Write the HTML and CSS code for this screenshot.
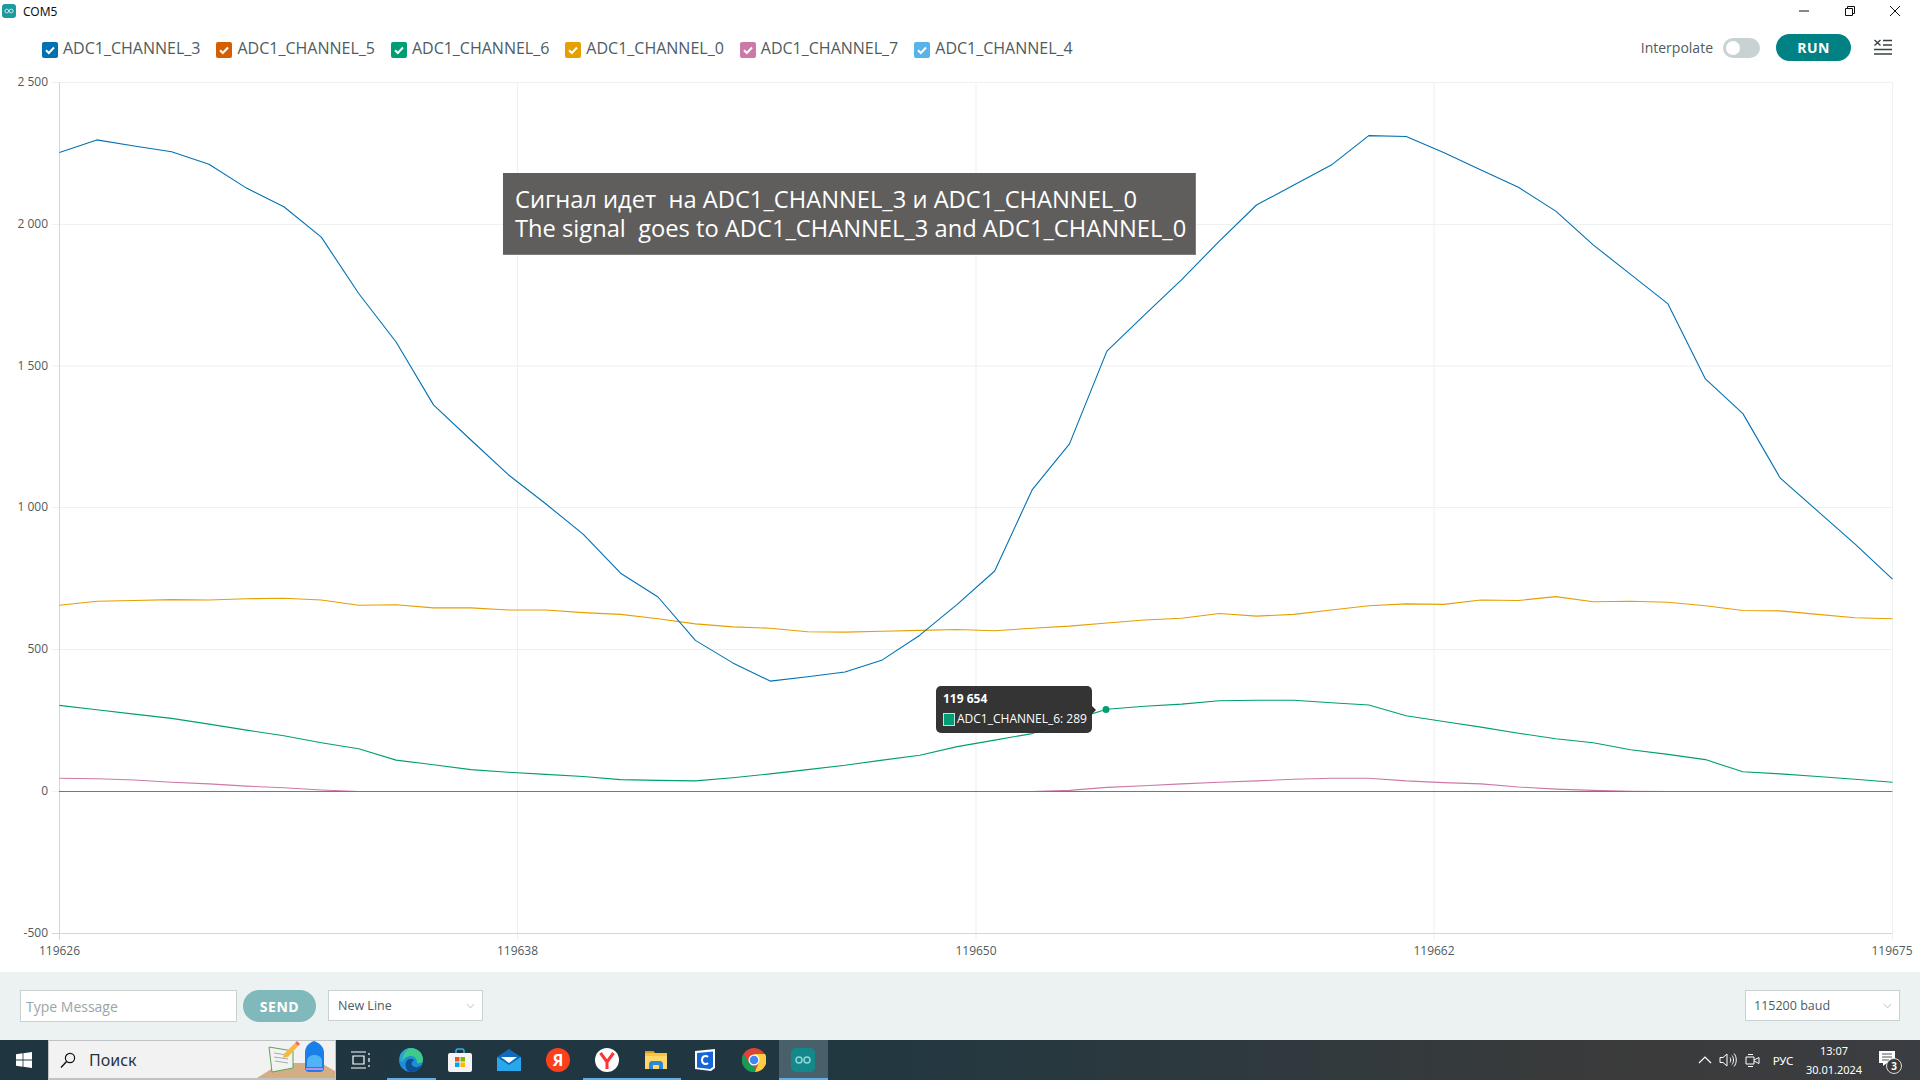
FILE: index.html
```
<!DOCTYPE html>
<html lang="ru">
<head>
<meta charset="utf-8">
<title>COM5</title>
<link rel="stylesheet" href="styles.css">
</head>
<body>
<div class="app">
  <header class="titlebar">
    <div class="title-left">
      <svg class="app-icon" viewBox="0 0 14 14"><rect width="14" height="14" rx="3" fill="#1d9a9e"/><circle cx="4.8" cy="7" r="1.9" fill="none" stroke="#bfe6e6" stroke-width="1"/><circle cx="9.2" cy="7" r="1.9" fill="none" stroke="#bfe6e6" stroke-width="1"/></svg>
      <span class="title-text">COM5</span>
    </div>
    <div class="win-controls">
      <svg class="win-btn" viewBox="0 0 12 12"><path d="M1 6H11" stroke="#111" fill="none"/></svg>
      <svg class="win-btn" viewBox="0 0 12 12"><path d="M1.5 3.5H8.5V10.5H1.5ZM3.5 3.5V1.5H10.5V8.5H8.5" stroke="#111" fill="none"/></svg>
      <svg class="win-btn" viewBox="0 0 12 12"><path d="M1 1L11 11M11 1L1 11" stroke="#111" fill="none"/></svg>
    </div>
  </header>

  <section class="legend">
    <div class="channels">
      <label class="channel"><span class="check c-blue"><svg viewBox="0 0 16 16"><path d="M4 8.3L6.8 11L12 5.5"/></svg></span>ADC1_CHANNEL_3</label>
      <label class="channel"><span class="check c-red"><svg viewBox="0 0 16 16"><path d="M4 8.3L6.8 11L12 5.5"/></svg></span>ADC1_CHANNEL_5</label>
      <label class="channel"><span class="check c-green"><svg viewBox="0 0 16 16"><path d="M4 8.3L6.8 11L12 5.5"/></svg></span>ADC1_CHANNEL_6</label>
      <label class="channel"><span class="check c-amber"><svg viewBox="0 0 16 16"><path d="M4 8.3L6.8 11L12 5.5"/></svg></span>ADC1_CHANNEL_0</label>
      <label class="channel"><span class="check c-pink"><svg viewBox="0 0 16 16"><path d="M4 8.3L6.8 11L12 5.5"/></svg></span>ADC1_CHANNEL_7</label>
      <label class="channel"><span class="check c-sky"><svg viewBox="0 0 16 16"><path d="M4 8.3L6.8 11L12 5.5"/></svg></span>ADC1_CHANNEL_4</label>
    </div>
    <div class="actions">
      <span class="interp">Interpolate</span>
      <span class="toggle"><span class="knob"></span></span>
      <button class="run">RUN</button>
      <svg class="clear-icon" viewBox="0 0 18 16"><path d="M0.5 1L6.5 6.5M6.5 1L0.5 6.5M9 1.5H18M9 6H18M0 10.5H18M0 15H18" stroke="#374146" stroke-width="1.4" fill="none"/></svg>
    </div>
  </section>

  <main class="chart">
    <svg class="plot" viewBox="0 66 1920 906">
      <g class="grid">
        <path d="M52 82.5H1892M52 224.5H1892M52 366H1892M52 507.5H1892M52 649.5H1892M52 791.5H1892"/>
        <path d="M517.5 82V940M976 82V940M1434 82V940M1892.5 82V940"/>
      </g>
      <path class="axis" d="M59.5 82V940M52 933.5H1892"/>
      <g class="ylabels">
        <text x="48" y="81.500">2 500</text>
        <text x="48" y="223.500">2 000</text>
        <text x="48" y="365">1 500</text>
        <text x="48" y="506.500">1 000</text>
        <text x="48" y="648.500">500</text>
        <text x="48" y="790.500">0</text>
        <text x="48" y="932.500">-500</text>
      </g>
      <g class="xlabels">
        <text x="59.500" y="950.500">119626</text>
        <text x="517.500" y="950.500">119638</text>
        <text x="976" y="950.500">119650</text>
        <text x="1434" y="950.500">119662</text>
        <text x="1892" y="950.500">119675</text>
      </g>
      <polyline class="line s-pink" points="59.4,778.3 96.8,778.7 134.2,780 171.6,782.2 209,783.9 246.5,786.1 283.9,787.8 321.3,790 358.7,791.5 396.1,791.5 1032.1,791.5 1069.5,790.4 1106.9,787.4 1144.3,785.7 1181.7,783.9 1219.1,782.2 1256.5,780.9 1293.9,779.2 1331.3,778.3 1368.8,778.3 1406.2,780.9 1443.6,782.6 1481,783.9 1518.4,787 1555.8,789.1 1593.2,790.4 1630.6,791.3 1668,791.5 1892.5,791.5"/>
      <polyline class="line s-amber" points="59.4,605.3 96.8,601.3 134.2,600.5 171.6,599.6 209,600 246.5,598.7 283.9,598.3 321.3,600 358.7,605.3 396.1,604.8 433.5,607.9 470.9,607.9 508.3,610 545.7,610 583.1,612.6 620.6,614.4 658,618.7 695.4,623.9 732.8,626.9 770.2,628.2 807.6,631.7 845,632.1 882.4,631.3 919.8,630.4 957.2,629.5 994.7,630.8 1032.1,628.2 1069.5,626.1 1106.9,623 1144.3,620 1181.7,618.3 1219.1,613.5 1256.5,616.1 1293.9,614.4 1331.3,610 1368.8,605.7 1406.2,603.9 1443.6,604.4 1481,600 1518.4,600.5 1555.8,596.6 1593.2,601.8 1630.6,601.3 1668,602.2 1705.4,605.7 1742.9,610.5 1780.3,610.9 1817.7,614.4 1855.1,617.8 1892.5,618.7"/>
      <polyline class="line s-green" points="59.4,705.4 96.8,709.8 134.2,714.1 171.6,718.4 209,724.1 246.5,730.1 283.9,735.8 321.3,742.7 358.7,748.8 396.1,760.1 433.5,764.8 470.9,769.6 508.3,772.2 545.7,774.4 583.1,776.5 620.6,779.6 658,780.4 695.4,780.9 732.8,777.8 770.2,773.9 807.6,769.6 845,765.3 882.4,760.1 919.8,755.3 957.2,746.6 994.7,740.1 1032.1,733.6 1069.5,720.6 1106.9,709.3 1144.3,706.3 1181.7,704.1 1219.1,700.7 1256.5,700.2 1293.9,700.2 1331.3,702.8 1368.8,705 1406.2,715.8 1443.6,721.5 1481,727.1 1518.4,733.2 1555.8,738.8 1593.2,742.7 1630.6,749.7 1668,754.4 1705.4,759.6 1742.9,771.8 1780.3,773.9 1817.7,776.5 1855.1,779.2 1892.5,782.2"/>
      <polyline class="line s-blue" points="59.4,152.5 96.8,139.9 134.2,146 171.6,151.7 209,164.2 246.5,188.1 283.9,206.7 321.3,237.1 358.7,293.5 396.1,342 433.5,404.9 470.9,440 508.3,474.7 545.7,503.8 583.1,534.1 620.6,573.2 658,597 695.4,640.4 732.8,662.9 770.2,681.1 807.6,676.8 845,672 882.4,659.9 919.8,635.2 957.2,604.4 994.7,571 1032.1,489.9 1069.5,443.9 1106.9,351.1 1144.3,315.1 1181.7,279.6 1219.1,241.4 1256.5,205 1293.9,185 1331.3,165.1 1368.8,135.6 1406.2,136.5 1443.6,152.5 1481,169.9 1518.4,187.2 1555.8,211.1 1593.2,244.9 1630.6,274.4 1668,303.9 1705.4,378.9 1742.9,413.6 1780.3,478.2 1817.7,511.1 1855.1,544.1 1892.5,579.2"/>
      <path class="zero" d="M59 791.5H1892"/>
      <circle class="dot" cx="1106" cy="709.5" r="3.5"/>
    </svg>
    <div class="note">
      <div class="note-line">Сигнал идет  на ADC1_CHANNEL_3 и ADC1_CHANNEL_0</div>
      <div class="note-line">The signal  goes to ADC1_CHANNEL_3 and ADC1_CHANNEL_0</div>
    </div>
    <div class="tip">
      <div class="tip-title">119 654</div>
      <div class="tip-row"><span class="tip-swatch"></span>ADC1_CHANNEL_6: 289</div>
    </div>
  </main>

  <footer class="footer">
    <div class="send-group">
      <input class="msg" type="text" placeholder="Type Message">
      <button class="send">SEND</button>
      <div class="select newline"><span>New Line</span><svg class="chev" viewBox="0 0 10 6"><path d="M1 1L5 5L9 1"/></svg></div>
    </div>
    <div class="select baud"><span>115200 baud</span><svg class="chev" viewBox="0 0 10 6"><path d="M1 1L5 5L9 1"/></svg></div>
  </footer>

  <nav class="taskbar">
    <div class="start"><svg class="win-logo" viewBox="0 0 16 16"><path d="M0 2.3L6.6 1.3V7.6H0ZM7.4 1.2L16 0V7.6H7.4ZM0 8.4H6.6V14.7L0 13.7ZM7.4 8.4H16V16L7.4 14.8Z" fill="#fff"/></svg></div>
    <div class="search">
      <svg class="search-icon" viewBox="0 0 16 16"><circle cx="10" cy="6" r="4.6" fill="none" stroke="#111" stroke-width="1.2"/><path d="M6.6 9.4L1 15.4" stroke="#111" stroke-width="1.4"/></svg>
      <span class="search-text">Поиск</span>
      <svg class="search-art" viewBox="0 0 78 40">
        <path d="M0 40L24 25H64L78 33V40Z" fill="#d3ae84"/>
        <path d="M12 9L36 13V30L15 34Z" fill="#f1f4ee" stroke="#5fa05f" stroke-width="1"/>
        <path d="M17 15L30 17M17 19L31 21M18 23L31 25" stroke="#aab" stroke-width="1"/>
        <path d="M27 16L38 5L41 8L31 19L26 20Z" fill="#f5b942"/><path d="M38 5L40 3L43 6L41 8Z" fill="#ef6b5a"/>
        <path d="M48 15C48 8 52 5 57 3C62 5 67 8 67 15V30C67 33 65 34 62 34H53C50 34 48 33 48 30Z" fill="#1a7fe8"/>
        <path d="M50 24C50 19 53 17 57.500 17C62 17 65 19 65 24V29H50Z" fill="#4fb4f7"/>
        <path d="M49 31H66" stroke="#c58be8" stroke-width="2"/>
      </svg>
    </div>
    <div class="task-icons">
      <div class="task task-view"><svg class="ti" viewBox="0 0 24 24"><path d="M3 4H18M3 20H18M5 8H16V16H5ZM21 5V7M21 10V14M21 17V19" stroke="#fff" fill="none" stroke-width="1.200"/></svg></div>
      <div class="task open"><svg class="ti" viewBox="0 0 24 24"><circle cx="12" cy="12" r="12" fill="#1d8fd8"/><path d="M12 0A12 12 0 0 1 24 12C24 14.500 21 16 18 15C18.500 11 15.500 8 12 8C8 8 4.500 10.500 3.500 14C1 13 0.500 10 1.500 7C4 2.500 8 0 12 0Z" fill="#3ecb8a"/><path d="M1.500 7C4 2.500 8 0 12 0C7.500 1.500 4 4 3.500 14C1 13 0.500 10 1.500 7Z" fill="#2a9fe0"/><path d="M7 14C9 10 14 10 15 13C13 13 12 15 13 17C15 20 20 20 23.500 16C21.500 21 17 24 12 24C8 24 5.500 19 7 14Z" fill="#0b4f94"/></svg></div>
      <div class="task"><svg class="ti" viewBox="0 0 24 24"><path d="M8 7V3C8 1.500 9 1 10 1H14C15 1 16 1.500 16 3V7" fill="none" stroke="#37aef0" stroke-width="1.500"/><rect x="0" y="5" width="24" height="19" rx="2" fill="#f4f4f4"/><rect x="7" y="9" width="4.500" height="4.500" fill="#f25022"/><rect x="12.500" y="9" width="4.500" height="4.500" fill="#7fba00"/><rect x="7" y="14.500" width="4.500" height="4.500" fill="#00a4ef"/><rect x="12.500" y="14.500" width="4.500" height="4.500" fill="#ffb900"/></svg></div>
      <div class="task"><svg class="ti" viewBox="0 0 24 24"><path d="M0 9L12 1L24 9V23H0Z" fill="#0f6cbd"/><path d="M0 9L12 17L24 9V23H0Z" fill="#28a8ea"/><path d="M4 9H20L12 15Z" fill="#fff"/></svg></div>
      <div class="task"><svg class="ti" viewBox="0 0 24 24"><circle cx="12" cy="12" r="12" fill="#fc3f1d"/><text class="ya" x="12" y="18">Я</text></svg></div>
      <div class="task open"><svg class="ti" viewBox="0 0 24 24"><circle cx="12" cy="12" r="12" fill="#fff"/><path d="M5.500 5L12 14L18.500 5M12 14V21" stroke="#f33" stroke-width="3" fill="none"/></svg></div>
      <div class="task open"><svg class="ti" viewBox="0 0 24 24"><path d="M1 3H9L11 5H23V21H1Z" fill="#f5c542"/><path d="M1 3H9L11 5H1Z" fill="#d89c1c"/><path d="M1 8H23V21H1Z" fill="#ffd76a"/><path d="M5 21V15L7 13H17L19 15V21H15V17H9V21Z" fill="#2b8ad8"/></svg></div>
      <div class="task"><svg class="ti" viewBox="0 0 24 24"><path d="M2 3L22 1V20L18 23L2 21Z" fill="#fff"/><path d="M4 5L20 3.500V19L17 21L4 19.500Z" fill="#1565d8"/><path d="M15 9C13 7 9 8 9 12C9 16 13 17 15 15" stroke="#fff" stroke-width="2" fill="none"/></svg></div>
      <div class="task"><svg class="ti" viewBox="0 0 24 24"><circle cx="12" cy="12" r="12" fill="#db4437"/><path d="M12 12L1.600 18A12 12 0 0 0 13 24Z" fill="#0f9d58"/><path d="M12 6H23A12 12 0 0 1 13 24L17 14Z" fill="#ffcd40"/><path d="M1.600 18A12 12 0 0 1 1.600 6L7 15Z" fill="#0f9d58"/><circle cx="12" cy="12" r="5.500" fill="#fff"/><circle cx="12" cy="12" r="4.300" fill="#4285f4"/></svg></div>
      <div class="task active"><svg class="ti" viewBox="0 0 24 24"><rect width="24" height="24" rx="5" fill="#14898c"/><circle cx="8" cy="12" r="3" fill="none" stroke="#8fd6d6" stroke-width="1.500"/><circle cx="16" cy="12" r="3" fill="none" stroke="#8fd6d6" stroke-width="1.500"/></svg></div>
    </div>
    <div class="tray">
      <div class="tray-cell w-caret"><svg class="tray-icon" viewBox="0 0 14 14"><path d="M1 10L7 4L13 10" stroke="#fff" fill="none" stroke-width="1.200"/></svg></div>
      <div class="tray-cell w-sound"><svg class="tray-icon wide" viewBox="0 0 18 16"><path d="M1 5.500H4L8 2V14L4 10.500H1Z M11 5.500C12 7 12 9 11 10.500M13 3.500C15 6 15 10 13 12.500M15 1.500C18 5 18 11 15 14.500" stroke="#fff" fill="none"/></svg></div>
      <div class="tray-cell w-cam"><svg class="tray-icon wide" viewBox="0 0 18 16"><path d="M2 5H10V12H2ZM10 8L15 5.500V11.500L10 9M4 2.500H9M4 14.500H9" stroke="#fff" fill="none"/></svg></div>
      <div class="tray-cell w-lang">РУС</div>
      <div class="clock"><span>13:07</span><span>30.01.2024</span></div>
      <div class="notify">
        <svg class="notify-icon" viewBox="0 0 16 15"><path d="M0 0H16V12H8L4 15V12H0Z" fill="#fff"/><path d="M3 3H13M3 6H13M3 9H10" stroke="#555"/></svg>
        <span class="badge">3</span>
      </div>
    </div>
  </nav>
</div>
</body>
</html>
```
FILE: styles.css
```
* { box-sizing: border-box; }
html, body { margin: 0; padding: 0; background: #fff; }
body { font-family: "Open Sans", "Noto Sans", sans-serif; color: #4e5b61; }
.app { width: 1920px; height: 1080px; display: flex; flex-direction: column; overflow: hidden; }

.titlebar { height: 22px; display: flex; justify-content: space-between; align-items: center; }
.title-left { display: flex; align-items: center; gap: 7px; padding-left: 2px; }
.app-icon { width: 14px; height: 14px; display: block; }
.title-text { font-family: "Noto Sans", sans-serif; font-size: 12px; color: #111; }
.win-controls { display: flex; gap: 33.500px; padding-right: 19px; }
.win-btn { width: 12px; height: 12px; display: block; }

.legend { height: 44px; display: flex; justify-content: space-between; align-items: center; padding: 7px 28px 0 42px; }
.channels { display: flex; gap: 16px; margin-top: 1px; }
.channel { display: flex; align-items: center; gap: 5px; font-size: 16px; line-height: 20px; color: #4e5b61; }
.check { width: 16px; height: 16px; border-radius: 2px; display: block; margin-top: 4px; }
.check svg { width: 16px; height: 16px; display: block; fill: none; stroke: #fff; stroke-width: 2; }
.c-blue { background: #0072b2; }
.c-red { background: #d55e00; }
.c-green { background: #009e73; }
.c-amber { background: #e69f00; }
.c-pink { background: #cc79a7; }
.c-sky { background: #56b4e9; }

.actions { display: flex; align-items: center; }
.interp { font-size: 14px; margin-right: 10px; }
.toggle { width: 37px; height: 20px; border-radius: 10px; background: #c9d2d2; display: flex; align-items: center; padding-left: 3px; margin-right: 16px; }
.knob { width: 14px; height: 14px; border-radius: 50%; background: #fff; display: block; }
.run { width: 75px; height: 27px; border: 0; border-radius: 14px; background: #008184; color: #fff; font: 700 14px "Open Sans", sans-serif; letter-spacing: 0.5px; padding: 0; margin-right: 23px; }
.clear-icon { width: 18px; height: 16px; display: block; margin-bottom: 2px; }

.chart { position: relative; height: 906px; }
.plot { display: block; width: 1920px; height: 906px; }
.grid path { stroke: #edf1f1; stroke-width: 1; fill: none; }
.axis { stroke: #d2d6d6; stroke-width: 1; fill: none; }
.ylabels text, .xlabels text { font: 12px "Open Sans", sans-serif; fill: #4e5b61; dominant-baseline: central; }
.ylabels text { text-anchor: end; }
.xlabels text { text-anchor: middle; }
.line { fill: none; stroke-width: 1.1; stroke-linejoin: round; }
.s-blue { stroke: #0072b2; }
.s-amber { stroke: #e69f00; }
.s-green { stroke: #009e73; }
.s-pink { stroke: #cc79a7; }
.zero { stroke: #d55e00; stroke-width: 1.2; fill: none; }
.dot { fill: #009e73; }

.note { position: absolute; left: 503px; top: 107px; width: 693px; height: 82px; background: #5f5e5c; border-right: 1px solid #7d7d7b; border-bottom: 1px solid #7d7d7b; padding: 11.500px 0 0 12px; color: #fff; font-size: 23.700px; line-height: 29px; }
.note-line { white-space: pre; }

.tip { position: absolute; left: 936px; top: 620px; width: 156px; height: 47px; border-radius: 5px; background: rgba(44, 44, 44, 0.96); color: #fff; font-size: 12px; padding: 4px 7px; }
.tip::after { content: ""; position: absolute; right: -4px; top: 20px; border-left: 4px solid #2c2c2c; border-top: 4px solid transparent; border-bottom: 4px solid transparent; }
.tip-title { font-weight: 700; line-height: 18px; height: 20px; }
.tip-row { display: flex; align-items: center; gap: 2px; line-height: 18px; white-space: nowrap; }
.tip-swatch { width: 12px; height: 13px; background: #009e73; border: 1px solid #bfe6da; display: block; flex: none; }

.footer { height: 68px; background: #ecf1f1; display: flex; justify-content: space-between; align-items: flex-start; padding: 18px 20px 0; }
.send-group { display: flex; align-items: flex-start; }
.msg { width: 217px; height: 32px; border: 1px solid #c9d2d2; background: #fff; font: 14px "Open Sans", sans-serif; padding: 0 5px; margin-right: 6px; outline: 0; }
.msg::placeholder { color: #9aa5a8; opacity: 1; }
.send { width: 73px; height: 32px; border: 0; border-radius: 16px; background: #7fb9bb; color: #fff; font: 700 14px "Open Sans", sans-serif; letter-spacing: 0.5px; padding: 0; margin-right: 12px; }
.select { height: 31px; border: 1px solid #c9d2d2; background: #fff; display: flex; align-items: center; justify-content: space-between; font-size: 12.500px; color: #4e5b61; }
.newline { width: 155px; padding: 0 7px 0 9px; }
.baud { width: 155px; padding: 0 7px 0 8px; }
.chev { width: 9px; height: 6px; display: block; fill: none; stroke: #c9d2d2; stroke-width: 1.2; }

.taskbar { height: 40px; display: flex; align-items: stretch; background: linear-gradient(90deg, #1f3640 0%, #203741 42%, #3b3b3b 85%, #3a3d42 100%); }
.start { width: 48px; display: flex; align-items: center; justify-content: center; }
.win-logo { width: 16px; height: 16px; display: block; }
.search { width: 288px; position: relative; background: #f2f2f2; border: 1px solid #bfc3c3; border-bottom-width: 2px; display: flex; align-items: center; padding-left: 11px; }
.search-icon { width: 16px; height: 16px; display: block; }
.search-text { margin-left: 13px; font: 16px "Noto Sans", sans-serif; color: #1f3640; }
.search-art { position: absolute; right: 0; bottom: 0; width: 78px; height: 40px; display: block; }
.task-icons { display: flex; margin-left: 1.500px; }
.task { width: 49px; display: flex; align-items: center; justify-content: center; border-bottom: 2px solid transparent; padding-top: 2px; }
.task-view .ti { margin-right: 5px; }
.task.open { border-bottom-color: #63aee6; }
.task.active { background: #47606a; border-bottom-color: #63aee6; }
.ti { width: 24px; height: 24px; display: block; }
.ya { font: 700 16px "Noto Sans", sans-serif; fill: #fff; text-anchor: middle; }
.tray { margin-left: auto; display: flex; align-items: center; color: #fff; font-family: "Noto Sans", sans-serif; font-size: 11.500px; padding-right: 5px; }
.tray-cell { display: flex; justify-content: center; align-items: center; }
.w-caret { width: 24px; }
.w-sound { width: 22px; }
.w-cam { width: 28px; }
.w-lang { width: 32px; }
.tray-icon { width: 14px; height: 14px; display: block; }
.tray-icon.wide { width: 18px; height: 16px; }
.clock { width: 70px; display: flex; flex-direction: column; align-items: center; line-height: 19px; font-size: 11px; }
.notify { position: relative; width: 46px; height: 40px; }
.notify-icon { position: absolute; left: 10px; top: 11px; width: 16px; height: 15px; display: block; }
.badge { position: absolute; left: 17px; top: 18px; width: 16px; height: 16px; border-radius: 50%; background: #3b3b3b; border: 1px solid #ddd; font-size: 10px; font-weight: 700; line-height: 14px; text-align: center; }
```
